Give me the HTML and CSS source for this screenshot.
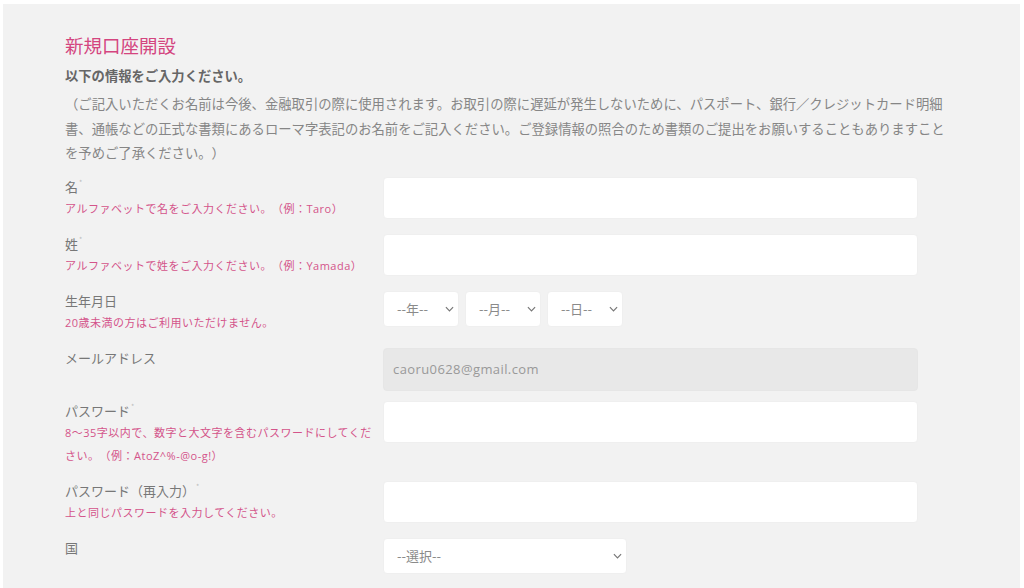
FILE: index.html
```html
<!DOCTYPE html>
<html lang="ja">
<head>
<meta charset="utf-8">
<title>新規口座開設</title>
<link rel="stylesheet" href="styles.css">
</head>
<body>
<main class="panel">
  <h1 class="title">新規口座開設</h1>
  <p class="lead">以下の情報をご入力ください。</p>
  <p class="note">（ご記入いただくお名前は今後、金融取引の際に使用されます。お取引の際に遅延が発生しないために、パスポート、銀行／クレジットカード明細書、通帳などの正式な書類にあるローマ字表記のお名前をご記入ください。ご登録情報の照合のため書類のご提出をお願いすることもありますことを予めご了承ください。）</p>

  <form class="form">
    <div class="row">
      <div class="label-col">
        <div class="label">名<span class="req">*</span></div>
        <div class="hint">アルファベットで名をご入力ください。（例：Taro）</div>
      </div>
      <input class="text" type="text">
    </div>

    <div class="row">
      <div class="label-col">
        <div class="label">姓<span class="req">*</span></div>
        <div class="hint">アルファベットで姓をご入力ください。（例：Yamada）</div>
      </div>
      <input class="text" type="text">
    </div>

    <div class="row">
      <div class="label-col">
        <div class="label">生年月日</div>
        <div class="hint">20歳未満の方はご利用いただけません。</div>
      </div>
      <div class="selects">
        <div class="select-wrap date">
          <select class="select"><option>--年--</option></select>
          <svg class="chev" viewBox="0 0 10 6" width="9" height="6"><path d="M1 1l4 4 4-4" fill="none" stroke="#777" stroke-width="1.3"/></svg>
        </div>
        <div class="select-wrap date">
          <select class="select"><option>--月--</option></select>
          <svg class="chev" viewBox="0 0 10 6" width="9" height="6"><path d="M1 1l4 4 4-4" fill="none" stroke="#777" stroke-width="1.3"/></svg>
        </div>
        <div class="select-wrap date">
          <select class="select"><option>--日--</option></select>
          <svg class="chev" viewBox="0 0 10 6" width="9" height="6"><path d="M1 1l4 4 4-4" fill="none" stroke="#777" stroke-width="1.3"/></svg>
        </div>
      </div>
    </div>

    <div class="row row-email">
      <div class="label-col">
        <div class="label">メールアドレス</div>
      </div>
      <input class="text disabled" type="text" value="caoru0628@gmail.com" disabled>
    </div>

    <div class="row">
      <div class="label-col">
        <div class="label">パスワード<span class="req">*</span></div>
        <div class="hint">8〜35字以内で、数字と大文字を含むパスワードにしてください。（例：AtoZ^%-@o-g!）</div>
      </div>
      <input class="text" type="password">
    </div>

    <div class="row">
      <div class="label-col">
        <div class="label">パスワード（再入力）<span class="req">*</span></div>
        <div class="hint">上と同じパスワードを入力してください。</div>
      </div>
      <input class="text" type="password">
    </div>

    <div class="row">
      <div class="label-col">
        <div class="label">国</div>
      </div>
      <div class="select-wrap country">
        <select class="select"><option>--選択--</option></select>
        <svg class="chev" viewBox="0 0 10 6" width="9" height="6"><path d="M1 1l4 4 4-4" fill="none" stroke="#777" stroke-width="1.3"/></svg>
      </div>
    </div>
  </form>
</main>
</body>
</html>
```
FILE: styles.css
```css
html, body {
  margin: 0;
  padding: 0;
  background: #ffffff;
}

body {
  padding: 4px 4px 0 3px;
  font-family: "Open Sans", "Noto Sans CJK JP", sans-serif;
  color: #777777;
  text-spacing-trim: space-all;
}

.panel {
  background: #f2f2f2;
  min-height: 584px;
  padding: 28px 0 0 62px;
  box-sizing: border-box;
}

.title {
  margin: 0;
  font-size: 18.5px;
  line-height: 26px;
  font-weight: 400;
  color: #d4457f;
  font-family: "Noto Sans CJK JP", sans-serif;
}

.lead {
  margin: 8px 0 0;
  font-size: 13.3px;
  line-height: 20px;
  font-weight: 700;
  color: #666666;
  font-family: "Noto Sans CJK JP", sans-serif;
}

.note {
  margin: 6px 0 0;
  width: 888px;
  font-size: 13.33px;
  line-height: 24.5px;
  color: #868686;
  font-family: "Noto Sans CJK JP", sans-serif;
}

.form {
  margin-top: 11px;
}

.row {
  display: flex;
  align-items: flex-start;
  margin-bottom: 14px;
}

.row-email {
  margin-bottom: 10px;
}

.label-col {
  width: 312px;
  margin-right: 6px;
  flex: none;
}

.label {
  font-size: 13px;
  line-height: 20px;
  color: #777777;
  font-family: "Noto Sans CJK JP", sans-serif;
}

.req {
  font-size: 7px;
  color: #bbbbbb;
  vertical-align: top;
  line-height: 10px;
  margin-left: 1px;
}

.hint {
  font-size: 11px;
  line-height: 23px;
  letter-spacing: 0.5px;
  color: #d4548a;
}

.text {
  width: 535px;
  height: 42px;
  box-sizing: border-box;
  border: 1px solid #efefef;
  border-radius: 4px;
  background: #ffffff;
  padding: 0 9px;
  font-family: "Open Sans", sans-serif;
  font-size: 13px;
  color: #999999;
  outline: none;
}

.text.disabled {
  background: #e8e8e8;
  border-color: #e6e6e6;
  height: 43px;
  letter-spacing: 0.4px;
}

.selects {
  display: flex;
  gap: 6px;
}

.select-wrap {
  position: relative;
  display: block;
}

.select {
  appearance: none;
  -webkit-appearance: none;
  display: block;
  width: 100%;
  height: 36px;
  box-sizing: border-box;
  border: 1px solid #efefef;
  border-radius: 4px;
  background: #ffffff;
  padding: 0 0 0 13px;
  font-family: "Noto Sans CJK JP", sans-serif;
  font-size: 13px;
  color: #8a8a8a;
  outline: none;
}

.select-wrap.date {
  width: 76px;
}

.select-wrap.country {
  width: 244px;
}

.chev {
  position: absolute;
  right: 5px;
  top: 15px;
  pointer-events: none;
}
```
